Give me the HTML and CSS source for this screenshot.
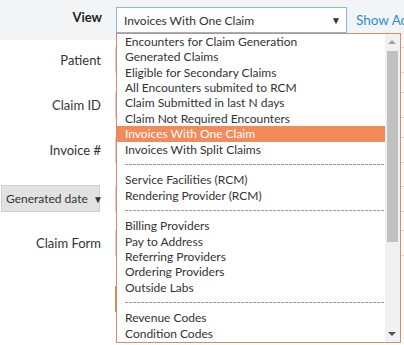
FILE: index.html
```html
<!DOCTYPE html>
<html lang="en">
<head>
    <meta charset="UTF-8">
    <title>Claims</title>
    <link rel="stylesheet" href="styles.css">
</head>
<body>
    <div class="topbar">
        <label class="label view-label">View</label>
        <div class="view-select">
            <span>Invoices With One Claim</span>
            <span class="caret">&#9660;</span>
        </div>
        <a class="show-link" href="#">Show Ac</a>
    </div>

    <div class="form">
        <div class="row">
            <label class="label">Patient</label>
            <div class="field"></div>
        </div>
        <div class="row">
            <label class="label">Claim ID</label>
            <div class="field"></div>
        </div>
        <div class="row">
            <label class="label">Invoice #</label>
            <div class="field"></div>
        </div>
        <div class="row row-date">
            <div class="date-cell">
                <button class="date-btn">Generated date <span class="small-caret">&#9660;</span></button>
            </div>
            <div class="field"></div>
        </div>
        <div class="row">
            <label class="label">Claim Form</label>
            <div class="field"></div>
        </div>
        <div class="row row-action">
            <span></span>
            <div class="action-btn"></div>
        </div>
    </div>

    <!-- open list of the View select -->
    <div class="listbox">
        <ul class="options">
            <li>Encounters for Claim Generation</li>
            <li>Generated Claims</li>
            <li>Eligible for Secondary Claims</li>
            <li>All Encounters submited to RCM</li>
            <li>Claim Submitted in last N days</li>
            <li>Claim Not Required Encounters</li>
            <li class="selected">Invoices With One Claim</li>
            <li>Invoices With Split Claims</li>
            <li class="sep"></li>
            <li>Service Facilities (RCM)</li>
            <li>Rendering Provider (RCM)</li>
            <li class="sep"></li>
            <li>Billing Providers</li>
            <li>Pay to Address</li>
            <li>Referring Providers</li>
            <li>Ordering Providers</li>
            <li>Outside Labs</li>
            <li class="sep"></li>
            <li>Revenue Codes</li>
            <li>Condition Codes</li>
        </ul>
        <div class="scrollbar">
            <span class="arrow up"></span>
            <div class="thumb"></div>
            <span class="arrow down"></span>
        </div>
    </div>
</body>
</html>
```

FILE: styles.css
```css
body {
    margin: 0;
    font-family: Lato, "Open Sans", sans-serif;
    color: #333;
    background: #fff;
    overflow: hidden;
}
.topbar {
    height: 40px;
    background: #f3f4f5;
    display: grid;
    grid-template-columns: 116px 231px auto;
    align-items: center;
    white-space: nowrap;
}
.label {
    text-align: right;
    padding-right: 14px;
    font-size: 13px;
}
.view-label {
    font-weight: bold;
    color: #222;
    margin-top: -6px;
}
.view-select {
    height: 26px;
    box-sizing: border-box;
    border: 1px solid #80b8e8;
    background: #fff;
    display: flex;
    align-items: center;
    justify-content: space-between;
    padding: 0 5px 0 7px;
    font-size: 12px;
    color: #333;
}
.caret {
    font-size: 10px;
    color: #333;
}
.show-link {
    margin-left: 9px;
    font-size: 13.5px;
    color: #2d8fd5;
    text-decoration: none;
    overflow: hidden;
}
.form {
    padding-top: 7px;
    display: flex;
    flex-direction: column;
    gap: 19px;
}
.row {
    display: grid;
    grid-template-columns: 115px 1fr;
    align-items: center;
    height: 26px;
}
.field {
    height: 26px;
    box-sizing: border-box;
    border: 1px solid #d4d4d4;
    margin-right: -20px;
}
.row-date {
    margin-top: 3px;
}
.date-cell {
    padding-left: 1px;
}
.date-btn {
    width: 99px;
    height: 27px;
    background: #e2e2e2;
    border: 1px solid #cfcfcf;
    font-family: Lato, sans-serif;
    font-size: 12px;
    color: #333;
    text-align: left;
    white-space: nowrap;
    padding: 0 0 0 4px;
}
.small-caret {
    font-size: 10px;
    margin-left: 2px;
}
.row-action {
    margin-top: 11px;
}
.action-btn {
    height: 26px;
    width: 80px;
    border-left: 2px solid #e8874f;
    background: #fff;
}
.listbox {
    position: absolute;
    left: 116px;
    top: 33px;
    width: 285px;
    height: 310px;
    box-sizing: border-box;
    border: 1px solid #d98a6c;
    background: #fff;
    display: flex;
}
.options {
    list-style: none;
    margin: 0;
    padding: 0;
    flex: 1;
    overflow: hidden;
    font-size: 12px;
}
.options li {
    height: 15.37px;
    line-height: 15.37px;
    padding-left: 8px;
    white-space: nowrap;
    overflow: hidden;
    color: #333;
}
.options li.selected {
    background: #f28a5a;
    color: #fff;
}
.options li.sep {
    margin: 0 1px 0 8px;
    padding: 0;
    background: repeating-linear-gradient(90deg, #999 0 3px, transparent 3px 4px) no-repeat 0 50% / 100% 1px;
}
.scrollbar {
    width: 15px;
    background: #f1f1f1;
    position: relative;
}
.thumb {
    position: absolute;
    left: 2px;
    right: 2px;
    top: 17px;
    height: 191px;
    background: #c1c1c1;
}
.arrow {
    position: absolute;
    left: 3px;
    width: 0;
    height: 0;
    border-left: 4px solid transparent;
    border-right: 4px solid transparent;
}
.arrow.up {
    top: 6px;
    border-bottom: 4px solid #a3a3a3;
}
.arrow.down {
    bottom: 6px;
    border-top: 4px solid #505050;
}
```
